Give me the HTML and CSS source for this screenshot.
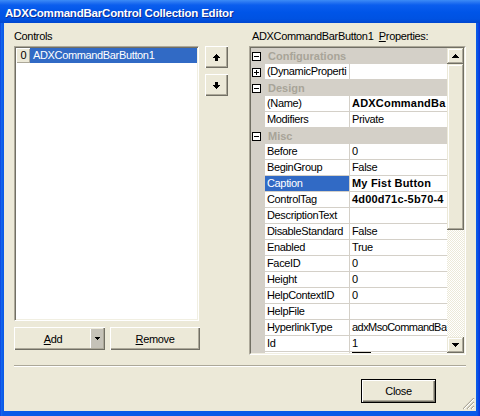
FILE: index.html
```html
<!DOCTYPE html>
<html>
<head>
<meta charset="utf-8">
<link rel="stylesheet" href="styles.css">
</head>
<body>
<div class="window">
  <div class="titlebar"><span class="title">ADXCommandBarControl Collection Editor</span></div>
  <div class="client">
    <div class="main">
      <div class="left">
        <div class="label">Controls</div>
        <div class="list-row">
          <div class="listbox">
            <div class="item"><span class="idx">0</span><span class="item-text">ADXCommandBarButton1</span></div>
          </div>
          <div class="arrows">
            <div class="btn arrow-btn">
              <svg width="7" height="7" viewBox="0 0 7 7" shape-rendering="crispEdges"><path d="M3 0h1v1h1v1h1v1h1v1h-2v3h-3v-3h-2v-1h1v-1h1v-1h1z" fill="#000"/></svg>
            </div>
            <div class="btn arrow-btn">
              <svg width="7" height="7" viewBox="0 0 7 7" shape-rendering="crispEdges"><path d="M2 0h3v3h2v1h-1v1h-1v1h-1v1h-1v-1h-1v-1h-1v-1h-1v-1h2z" fill="#000"/></svg>
            </div>
          </div>
        </div>
        <div class="list-buttons">
          <div class="btn split">
            <span class="btn-main"><u>A</u>dd</span>
            <span class="split-arrow"><svg width="5" height="3" viewBox="0 0 5 3" shape-rendering="crispEdges"><path d="M0 0h5v1h-1v1h-1v1h-1v-1h-1v-1h-1z" fill="#000"/></svg></span>
          </div>
          <div class="btn remove"><u>R</u>emove</div>
        </div>
      </div>
      <div class="right">
        <div class="label label-right">ADXCommandBarButton1&nbsp; <u>P</u>roperties:</div>
        <div class="grid">
          <div class="grid-inner">
            <div class="rows">
              <div class="cat"><span class="gutter"><span class="pm minus"></span></span><span class="cat-name">Configurations</span></div>
              <div class="prop"><span class="gutter"><span class="pm plus"></span></span><span class="name">(DynamicProperti</span><span class="value"></span></div>
              <div class="cat"><span class="gutter"><span class="pm minus"></span></span><span class="cat-name">Design</span></div>
              <div class="prop"><span class="gutter"></span><span class="name">(Name)</span><span class="value bold">ADXCommandBa</span></div>
              <div class="prop"><span class="gutter"></span><span class="name">Modifiers</span><span class="value">Private</span></div>
              <div class="cat"><span class="gutter"><span class="pm minus"></span></span><span class="cat-name">Misc</span></div>
              <div class="prop"><span class="gutter"></span><span class="name">Before</span><span class="value">0</span></div>
              <div class="prop"><span class="gutter"></span><span class="name">BeginGroup</span><span class="value">False</span></div>
              <div class="prop"><span class="gutter"></span><span class="name selected">Caption</span><span class="value bold">My Fist Button</span></div>
              <div class="prop"><span class="gutter"></span><span class="name">ControlTag</span><span class="value bold">4d00d71c-5b70-4</span></div>
              <div class="prop"><span class="gutter"></span><span class="name">DescriptionText</span><span class="value"></span></div>
              <div class="prop"><span class="gutter"></span><span class="name">DisableStandard</span><span class="value">False</span></div>
              <div class="prop"><span class="gutter"></span><span class="name">Enabled</span><span class="value">True</span></div>
              <div class="prop"><span class="gutter"></span><span class="name">FaceID</span><span class="value">0</span></div>
              <div class="prop"><span class="gutter"></span><span class="name">Height</span><span class="value">0</span></div>
              <div class="prop"><span class="gutter"></span><span class="name">HelpContextID</span><span class="value">0</span></div>
              <div class="prop"><span class="gutter"></span><span class="name">HelpFile</span><span class="value"></span></div>
              <div class="prop"><span class="gutter"></span><span class="name">HyperlinkType</span><span class="value tight">adxMsoCommandBa</span></div>
              <div class="prop"><span class="gutter"></span><span class="name">Id</span><span class="value">1</span></div>
              <div class="prop"><span class="gutter"></span><span class="name"></span><span class="value"><span class="next-mark"></span></span></div>
            </div>
            <div class="vscroll">
              <div class="sb-btn"><svg width="7" height="4" viewBox="0 0 7 4" shape-rendering="crispEdges"><path d="M3 0h1v1h1v1h1v1h1v1h-7v-1h1v-1h1v-1h1z" fill="#000"/></svg></div>
              <div class="sb-thumb"></div>
              <div class="sb-track"></div>
              <div class="sb-btn"><svg width="7" height="4" viewBox="0 0 7 4" shape-rendering="crispEdges"><path d="M0 0h7v1h-1v1h-1v1h-1v1h-1v-1h-1v-1h-1v-1h-1z" fill="#000"/></svg></div>
            </div>
          </div>
        </div>
      </div>
    </div>
    <div class="separator"></div>
    <div class="footer">
      <div class="btn default">Close</div>
    </div>
    <svg class="grip" width="12" height="12" viewBox="0 0 12 12">
      <path d="M11 0L0 11M11 4L4 11M11 8L8 11" stroke="#ACA899" stroke-width="1.2" fill="none"/>
      <path d="M11 1L1 11M11 5L5 11M11 9L9 11" stroke="#FFFFFF" stroke-width="1" fill="none"/>
    </svg>
  </div>
</div>
</body>
</html>
```
FILE: styles.css
```css
* { box-sizing: border-box; }
html, body { margin: 0; padding: 0; }
body {
  width: 480px;
  height: 416px;
  overflow: hidden;
  font-family: "Liberation Sans", Arial, sans-serif;
  font-size: 11px;
  letter-spacing: -0.35px;
  color: #000;
  background: #0A4BDC;
}
u { text-decoration: underline; text-underline-offset: 1px; }

.window {
  width: 480px;
  height: 416px;
  display: flex;
  flex-direction: column;
  background: linear-gradient(to right, #0831D9 0, #166AEE 1px, #0A5AE8 3px, #0A5AE8 calc(100% - 3px), #0831D9 100%);
}

.titlebar {
  height: 23px;
  flex: none;
  padding: 4px 0 0 5px;
  line-height: 19px;
  background: linear-gradient(to bottom, #3C8CF7 0, #2A78F2 2px, #0B5EEE 5px, #0055E8 12px, #0052E2 19px, #0046CF 23px);
}
.title {
  color: #fff;
  font-weight: bold;
  font-size: 11.5px;
  letter-spacing: -0.2px;
  text-shadow: 1px 1px 0 #0A2B93;
  white-space: nowrap;
}

.client {
  position: relative;
  height: 388px;
  margin: 0 4px;
  background: #ECE9D8;
  padding: 6px 0 0 10px;
  display: flex;
  flex-direction: column;
}

.main {
  display: flex;
  gap: 21px;
  height: 326px;
}

.label {
  height: 14px;
  line-height: 14px;
  margin-bottom: 3px;
  white-space: nowrap;
}
.label-right { padding-left: 3px; }

.left { width: 214px; display: flex; flex-direction: column; }
.list-row { display: flex; gap: 6px; }

.listbox {
  width: 186px;
  height: 275px;
  background: #fff;
  border: 1px solid;
  border-color: #ACA899 #fff #fff #ACA899;
  box-shadow: inset 1px 1px #716F64, inset -1px -1px #F1EFE2;
  padding: 1px;
}
.item { display: flex; height: 15px; line-height: 15px; }
.idx {
  width: 14px;
  flex: none;
  background: #ECE9D8;
  box-shadow: inset 1px 1px #fff, inset -1px -1px #ACA899;
  text-align: center;
  padding-left: 1px;
}
.item-text {
  flex: 1;
  background: #316AC5;
  color: #fff;
  padding-left: 3px;
  white-space: nowrap;
}

.btn {
  background: #ECE9D8;
  box-shadow: inset 1px 1px #fff, inset -1px -1px #716F64, inset -2px -2px #ACA899;
  display: flex;
  align-items: center;
  justify-content: center;
}
.arrows { display: flex; flex-direction: column; gap: 6px; }
.arrow-btn { width: 23px; height: 22px; }
.arrow-btn svg { display: block; }

.list-buttons { display: flex; gap: 5px; margin-top: 6px; }
.split { width: 91px; height: 23px; justify-content: flex-start; padding: 2px 2px 2px 0; }
.btn-main { width: 76px; text-align: center; padding-left: 2px; }
.split-arrow {
  width: 13px;
  height: 19px;
  background: #C5C2B8;
  border-left: 1px solid #fff;
  display: flex;
  align-items: center;
  justify-content: center;
}
.split-arrow svg { display: block; }
.remove { width: 90px; height: 23px; }

.right { width: 217px; display: flex; flex-direction: column; }
.grid {
  width: 217px;
  height: 309px;
  border: 1px solid;
  border-color: #ACA899 #fff #fff #ACA899;
}
.grid-inner {
  height: 100%;
  display: flex;
  border: 1px solid;
  border-color: #716F64 #F1EFE2 #F1EFE2 #716F64;
  background: #fff;
}
.rows { width: 196px; overflow: hidden; }
.cat {
  height: 16px;
  display: flex;
  align-items: center;
  background: #D4D0C8;
}
.gutter {
  width: 14px;
  flex: none;
  height: 16px;
  background: #D4D0C8;
  display: flex;
  align-items: center;
  padding-left: 1px;
}
.pm {
  width: 9px;
  height: 9px;
  border: 1px solid #000;
  background: #fff;
  position: relative;
}
.pm::before {
  content: "";
  position: absolute;
  left: 1px;
  top: 3px;
  width: 5px;
  height: 1px;
  background: #000;
}
.pm.plus::after {
  content: "";
  position: absolute;
  left: 3px;
  top: 1px;
  width: 1px;
  height: 5px;
  background: #000;
}
.cat-name {
  padding-left: 3px;
  font-weight: bold;
  letter-spacing: 0;
  color: #A8A498;
  line-height: 16px;
  white-space: nowrap;
}
.prop {
  height: 16px;
  display: flex;
}
.name {
  width: 85px;
  flex: none;
  height: 16px;
  line-height: 15px;
  padding-left: 2px;
  border-right: 1px solid #D4D0C8;
  border-bottom: 1px solid #D4D0C8;
  white-space: nowrap;
  overflow: hidden;
}
.name.selected { background: #316AC5; color: #fff; }
.value {
  width: 97px;
  flex: none;
  height: 16px;
  line-height: 15px;
  padding-left: 2px;
  border-bottom: 1px solid #D4D0C8;
  white-space: nowrap;
  overflow: hidden;
}
.value.tight { letter-spacing: -0.55px; }
.bold { font-weight: bold; letter-spacing: 0.2px; }
.next-mark {
  display: block;
  width: 19px;
  height: 1px;
  margin-top: 0;
  background: #000;
}

.vscroll {
  width: 17px;
  display: flex;
  flex-direction: column;
}
.sb-btn, .sb-thumb {
  background: #ECE9D8;
  box-shadow: inset -1px -1px #716F64, inset 1px 1px #ECE9D8, inset -2px -2px #ACA899, inset 2px 2px #fff;
}
.sb-btn {
  height: 16px;
  flex: none;
  display: flex;
  align-items: center;
  justify-content: center;
}
.sb-btn svg { display: block; }
.sb-thumb { height: 166px; flex: none; }
.sb-track {
  flex: 1;
  background-color: #fff;
  background-image: conic-gradient(#ECE9D8 25%, #fff 0 50%, #ECE9D8 0 75%, #fff 0);
  background-size: 2px 2px;
}

.separator {
  width: 452px;
  height: 2px;
  margin-top: 10px;
  border-top: 1px solid #ACA899;
  border-bottom: 1px solid #fff;
}
.footer {
  display: flex;
  justify-content: flex-end;
  width: 422px;
  margin-top: 12px;
}
.default {
  width: 75px;
  height: 24px;
  border: 1px solid #000;
  box-shadow: inset 1px 1px #fff, inset -1px -1px #716F64, inset -2px -2px #ACA899;
}
.grip {
  position: absolute;
  right: 1px;
  bottom: 1px;
}
```
